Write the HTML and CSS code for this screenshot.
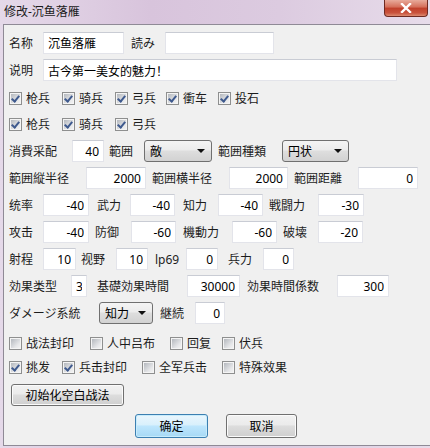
FILE: index.html
```html
<!DOCTYPE html>
<html>
<head>
  <meta charset="utf-8">
  <title>修改-沉鱼落雁</title>
  <link rel="stylesheet" href="styles.css">
</head>
<body>
  <div class="window">
    <div class="titlebar">
      <span class="title">修改-沉鱼落雁</span>
      <span class="close">
        <svg width="12" height="10" viewBox="0 0 12 10"><path d="M2 1 L10 9 M10 1 L2 9" stroke="#fff" stroke-width="2.4" stroke-linecap="square"/></svg>
      </span>
    </div>

    <div class="client">
      <!-- 名称 / 说明 -->
      <div class="row">
        <span class="lbl w34">名称</span>
        <input class="txt left w81" type="text" value="沉鱼落雁">
        <span class="lbl ml7 w34">読み</span>
        <input class="txt left w109" type="text" value="">
      </div>
      <div class="row">
        <span class="lbl w34">说明</span>
        <input class="txt left cjk w354" type="text" value="古今第一美女的魅力！">
      </div>

      <!-- 兵种 -->
      <div class="row ckrow r3">
        <span class="ck w53"><span class="box on"></span>枪兵</span>
        <span class="ck w53"><span class="box on"></span>骑兵</span>
        <span class="ck w51"><span class="box on"></span>弓兵</span>
        <span class="ck w52"><span class="box on"></span>衝车</span>
        <span class="ck"><span class="box on"></span>投石</span>
      </div>
      <div class="row ckrow r4">
        <span class="ck w53"><span class="box on"></span>枪兵</span>
        <span class="ck w53"><span class="box on"></span>骑兵</span>
        <span class="ck"><span class="box on"></span>弓兵</span>
      </div>

      <!-- 数值 -->
      <div class="row">
        <span class="lbl w63">消費采配</span>
        <input class="txt w32" type="text" value="40">
        <span class="lbl ml5 w35">範囲</span>
        <div class="sel w68"><span>敵</span><i class="arrow"></i></div>
        <span class="lbl ml6 w64">範囲種類</span>
        <div class="sel w67"><span>円状</span><i class="arrow"></i></div>
      </div>
      <div class="row">
        <span class="lbl w77">範囲縦半径</span>
        <input class="txt w60" type="text" value="2000">
        <span class="lbl ml6 w77">範囲横半径</span>
        <input class="txt w59" type="text" value="2000">
        <span class="lbl ml6 w64">範囲距離</span>
        <input class="txt w60" type="text" value="0">
      </div>
      <div class="row">
        <span class="lbl w34">统率</span>
        <input class="txt w46" type="text" value="-40">
        <span class="lbl ml8 w33">武力</span>
        <input class="txt w45" type="text" value="-40">
        <span class="lbl ml8 w35">知力</span>
        <input class="txt w45" type="text" value="-40">
        <span class="lbl ml6 w49">戦闘力</span>
        <input class="txt w46" type="text" value="-30">
      </div>
      <div class="row">
        <span class="lbl w34">攻击</span>
        <input class="txt w46" type="text" value="-40">
        <span class="lbl ml6 w36">防御</span>
        <input class="txt w45" type="text" value="-60">
        <span class="lbl ml7 w49">機動力</span>
        <input class="txt w45" type="text" value="-60">
        <span class="lbl ml6 w35">破壊</span>
        <input class="txt w45" type="text" value="-20">
      </div>
      <div class="row">
        <span class="lbl w34">射程</span>
        <input class="txt w33" type="text" value="10">
        <span class="lbl ml5 w35">视野</span>
        <input class="txt w32" type="text" value="10">
        <span class="lbl ml7 w31">lp69</span>
        <input class="txt w32" type="text" value="0">
        <span class="lbl ml10 w35">兵力</span>
        <input class="txt w31" type="text" value="0">
      </div>
      <div class="row">
        <span class="lbl w62">効果类型</span>
        <input class="txt w16" type="text" value="3">
        <span class="lbl ml10 w90">基礎効果時間</span>
        <input class="txt w53" type="text" value="30000">
        <span class="lbl ml7 w90">効果時間係数</span>
        <input class="txt w52" type="text" value="300">
      </div>
      <div class="row">
        <span class="lbl w90">ダメージ系統</span>
        <div class="sel w54"><span>知力</span><i class="arrow"></i></div>
        <span class="lbl ml7 w35">継続</span>
        <input class="txt w30" type="text" value="0">
      </div>

      <!-- 特效 -->
      <div class="row ckrow r12">
        <span class="ck w81"><span class="box"></span>战法封印</span>
        <span class="ck w80"><span class="box"></span>人中吕布</span>
        <span class="ck w52"><span class="box"></span>回复</span>
        <span class="ck"><span class="box"></span>伏兵</span>
      </div>
      <div class="row ckrow r13">
        <span class="ck w53"><span class="box on"></span>挑发</span>
        <span class="ck w80"><span class="box on"></span>兵击封印</span>
        <span class="ck w80"><span class="box"></span>全军兵击</span>
        <span class="ck"><span class="box"></span>特殊效果</span>
      </div>

      <div class="row r14">
        <button class="btn ml2 w113">初始化空白战法</button>
      </div>
      <div class="row actions">
        <button class="btn def w73">确定</button>
        <button class="btn w71">取消</button>
      </div>
    </div>
  </div>
</body>
</html>
```

FILE: styles.css
```css
/* Окно в стиле Win7 */
* {
  box-sizing: border-box;
}
body {
  margin: 0;
  width: 430px;
  height: 448px;
  overflow: hidden;
  font-family: "Noto Sans", "Noto Sans CJK SC", sans-serif;
  font-size: 12px;
  color: #1c1c1c;
}
.window {
  height: 448px;
  display: flex;
  flex-direction: column;
  background: linear-gradient(to right, #e5d9e9, #d8c4dc 35%, #dccbe0 65%, #e7dcea);
}
.titlebar {
  height: 24px;
  flex: none;
  display: flex;
  justify-content: space-between;
  align-items: flex-start;
}
.title {
  padding: 4px 0 0 4px;
  line-height: 16px;
  color: #1a1a1a;
}
.close {
  width: 44px;
  height: 17px;
  margin-right: 2px;
  border: 1px solid #6e2a22;
  border-top: none;
  border-radius: 0 0 4px 4px;
  background: linear-gradient(#e8ab9b, #d46d58 45%, #c0402b 50%, #c9523c 80%, #dc8a70);
  display: flex;
  justify-content: center;
  align-items: center;
}
.client {
  flex: 1;
  margin: 0 0 2px 3px;
  border: 1px solid #8f8a96;
  border-right: none;
  background: #f0f0f0;
  padding: 7px 0 0 5px;
}
.row {
  display: flex;
  align-items: center;
  height: 22px;
  margin-top: 5px;
}
.row:first-child {
  margin-top: 0;
}
.r3 { margin-top: 6px; }
.r4 { margin-top: 4px; }
.r12 { margin-top: 8px; }
.r13 { margin-top: 2px; }
.r14 { margin-top: 6px; }
.actions {
  margin-top: 8px;
  height: 24px;
  padding-left: 126px;
  gap: 18px;
}

.lbl {
  flex: none;
  white-space: nowrap;
}
.txt {
  flex: none;
  height: 22px;
  border: 1px solid #e3e4ea;
  border-top-color: #c9ccd4;
  background: #fff;
  font: inherit;
  color: #000;
  padding: 0 4px;
  text-align: right;
  outline: none;
}
.txt.left {
  text-align: left;
}
.txt.cjk {
  font-family: "Noto Sans CJK SC", sans-serif;
}

.sel {
  flex: none;
  height: 22px;
  border: 1px solid #707070;
  border-radius: 3px;
  background: linear-gradient(#f4f4f4, #ececec 45%, #dedede 50%, #d2d2d2);
  display: flex;
  justify-content: space-between;
  align-items: center;
  padding: 0 6px 0 5px;
  color: #000;
}
.arrow {
  width: 0;
  height: 0;
  border-left: 4px solid transparent;
  border-right: 4px solid transparent;
  border-top: 4px solid #111;
}

.ck {
  flex: none;
  display: flex;
  align-items: center;
  white-space: nowrap;
}
.box {
  width: 13px;
  height: 13px;
  margin-right: 4px;
  border: 1px solid #8e8f8f;
  background: #f4f4f4;
  padding: 1px;
  position: relative;
}
.box::before {
  content: "";
  display: block;
  width: 9px;
  height: 9px;
  background: linear-gradient(135deg, #b4b8be, #e6e7e9 70%, #f2f2f2);
}
.box.on::after {
  content: "";
  position: absolute;
  left: 3px;
  top: 1px;
  width: 3px;
  height: 6px;
  border-right: 2px solid #3f5a8e;
  border-bottom: 2px solid #3f5a8e;
  transform: rotate(40deg);
}

.btn {
  flex: none;
  height: 22px;
  border: 1px solid #707070;
  border-radius: 3px;
  background: linear-gradient(#f2f2f2, #ebebeb 45%, #dddddd 50%, #cfcfcf);
  box-shadow: inset 0 0 0 1px #fbfbfb;
  font: inherit;
  color: #000;
  padding: 0;
}
.actions .btn {
  height: 24px;
}
.btn.def {
  border-color: #3c7fb1;
  background: linear-gradient(#eaf6fd, #d9f0fc 45%, #bee6fd 50%, #a7d9f5);
  box-shadow: inset 0 0 0 1px #c8ecfc;
}

/* ширины и отступы */
.w16 { width: 16px; }
.w30 { width: 30px; }
.w31 { width: 31px; }
.w32 { width: 32px; }
.w33 { width: 33px; }
.w34 { width: 34px; }
.w35 { width: 35px; }
.w36 { width: 36px; }
.w45 { width: 45px; }
.w46 { width: 46px; }
.w49 { width: 49px; }
.w51 { width: 51px; }
.w52 { width: 52px; }
.w53 { width: 53px; }
.w54 { width: 54px; }
.w59 { width: 59px; }
.w60 { width: 60px; }
.w62 { width: 62px; }
.w63 { width: 63px; }
.w64 { width: 64px; }
.w67 { width: 67px; }
.w68 { width: 68px; }
.w71 { width: 71px; }
.w73 { width: 73px; }
.w77 { width: 77px; }
.w80 { width: 80px; }
.w81 { width: 81px; }
.w90 { width: 90px; }
.w109 { width: 109px; }
.w113 { width: 113px; }
.w354 { width: 354px; }
.ml2 { margin-left: 2px; }
.ml5 { margin-left: 5px; }
.ml6 { margin-left: 6px; }
.ml7 { margin-left: 7px; }
.ml8 { margin-left: 8px; }
.ml10 { margin-left: 10px; }
```
